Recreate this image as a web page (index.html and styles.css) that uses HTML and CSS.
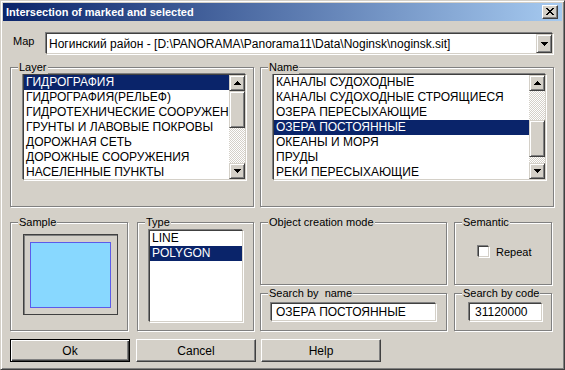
FILE: index.html
```html
<!DOCTYPE html>
<html>
<head>
<meta charset="utf-8">
<title>Intersection of marked and selected</title>
<link rel="stylesheet" href="styles.css">
</head>
<body>
<div class="window">
  <div class="titlebar">
    <span class="title">Intersection of marked and selected</span>
    <span class="close raised"><svg width="8" height="7" viewBox="0 0 8 7" shape-rendering="crispEdges"><path fill="#000" d="M0 0h2v1H0zM6 0h2v1H6zM1 1h2v1H1zM5 1h2v1H5zM2 2h4v1H2zM3 3h2v1H3zM2 4h4v1H2zM1 5h2v1H1zM5 5h2v1H5zM0 6h2v1H0zM6 6h2v1H6z"/></svg></span>
  </div>
  <div class="content">
    <div class="maprow">
      <span class="maplabel">Map</span>
      <div class="combo sunken">
        <span class="combo-text">Ногинский район - [D:\PANORAMA\Panorama11\Data\Noginsk\noginsk.sit]</span>
        <span class="sbtn dropbtn"><svg width="7" height="4" viewBox="0 0 7 4" shape-rendering="crispEdges"><path fill="#000" d="M0 0h7v1H0zM1 1h5v1H1zM2 2h3v1H2zM3 3h1v1H3z"/></svg></span>
      </div>
    </div>

    <div class="row2">
      <div class="group g-layer">
        <span class="legend">Layer</span>
        <div class="listbox sunken lb-big">
          <div class="items">
            <div class="item sel">ГИДРОГРАФИЯ</div>
            <div class="item">ГИДРОГРАФИЯ(РЕЛЬЕФ)</div>
            <div class="item">ГИДРОТЕХНИЧЕСКИЕ СООРУЖЕН</div>
            <div class="item">ГРУНТЫ И ЛАВОВЫЕ ПОКРОВЫ</div>
            <div class="item">ДОРОЖНАЯ СЕТЬ</div>
            <div class="item">ДОРОЖНЫЕ СООРУЖЕНИЯ</div>
            <div class="item">НАСЕЛЕННЫЕ ПУНКТЫ</div>
          </div>
          <div class="scrollbar">
            <span class="sbtn"><svg width="7" height="4" viewBox="0 0 7 4" shape-rendering="crispEdges"><path fill="#000" d="M3 0h1v1H3zM2 1h3v1H2zM1 2h5v1H1zM0 3h7v1H0z"/></svg></span>
            <span class="sbtn thumb"></span>
            <span class="track"></span>
            <span class="sbtn"><svg width="7" height="4" viewBox="0 0 7 4" shape-rendering="crispEdges"><path fill="#000" d="M0 0h7v1H0zM1 1h5v1H1zM2 2h3v1H2zM3 3h1v1H3z"/></svg></span>
          </div>
        </div>
      </div>
      <div class="group g-name">
        <span class="legend">Name</span>
        <div class="listbox sunken lb-big">
          <div class="items">
            <div class="item">КАНАЛЫ СУДОХОДНЫЕ</div>
            <div class="item">КАНАЛЫ СУДОХОДНЫЕ СТРОЯЩИЕСЯ</div>
            <div class="item">ОЗЕРА ПЕРЕСЫХАЮЩИЕ</div>
            <div class="item sel">ОЗЕРА ПОСТОЯННЫЕ</div>
            <div class="item">ОКЕАНЫ И МОРЯ</div>
            <div class="item">ПРУДЫ</div>
            <div class="item">РЕКИ ПЕРЕСЫХАЮЩИЕ</div>
          </div>
          <div class="scrollbar">
            <span class="sbtn"><svg width="7" height="4" viewBox="0 0 7 4" shape-rendering="crispEdges"><path fill="#000" d="M3 0h1v1H3zM2 1h3v1H2zM1 2h5v1H1zM0 3h7v1H0z"/></svg></span>
            <span class="track t-top"></span>
            <span class="sbtn thumb"></span>
            <span class="track"></span>
            <span class="sbtn"><svg width="7" height="4" viewBox="0 0 7 4" shape-rendering="crispEdges"><path fill="#000" d="M0 0h7v1H0zM1 1h5v1H1zM2 2h3v1H2zM3 3h1v1H3z"/></svg></span>
          </div>
        </div>
      </div>
    </div>

    <div class="row3">
      <div class="group g-sample">
        <span class="legend">Sample</span>
        <div class="sample-frame"><div class="sample-poly"></div></div>
      </div>
      <div class="group g-type">
        <span class="legend">Type</span>
        <div class="listbox sunken lb-type">
          <div class="items">
            <div class="item">LINE</div>
            <div class="item sel">POLYGON</div>
          </div>
        </div>
      </div>
      <div class="midcol">
        <div class="group g-mode">
          <span class="legend">Object creation mode</span>
        </div>
        <div class="group g-sname">
          <span class="legend">Search by &nbsp;name</span>
          <div class="field sunken f-name">ОЗЕРА ПОСТОЯННЫЕ</div>
        </div>
      </div>
      <div class="rightcol">
        <div class="group g-sem">
          <span class="legend">Semantic</span>
          <label class="check"><span class="box sunken"></span><span>Repeat</span></label>
        </div>
        <div class="group g-scode">
          <span class="legend">Search by code</span>
          <div class="field sunken f-code">31120000</div>
        </div>
      </div>
    </div>

    <div class="buttons">
      <span class="btn default">Ok</span>
      <span class="btn">Cancel</span>
      <span class="btn b-help">Help</span>
    </div>
  </div>
</div>
</body>
</html>
```

FILE: styles.css
```css
html, body {
  margin: 0;
  padding: 0;
  background: #d4d0c8;
}

.window {
  width: 565px;
  height: 370px;
  box-sizing: border-box;
  background: #d4d0c8;
  border: 1px solid;
  border-color: #d4d0c8 #404040 #404040 #d4d0c8;
  box-shadow: inset 1px 1px 0 #fff, inset -1px -1px 0 #808080;
  padding: 2px;
  display: flex;
  flex-direction: column;
  font-family: "Liberation Sans", Arial, sans-serif;
  font-size: 12px;
  color: #000;
}

.titlebar {
  height: 18px;
  flex: none;
  background: linear-gradient(to right, #0a246a, #a6caf0);
  display: flex;
  align-items: center;
  justify-content: space-between;
  padding: 0 4px 0 3px;
}

.title {
  color: #fff;
  font-weight: bold;
  font-size: 11px;
}

.raised {
  box-sizing: border-box;
  background: #d4d0c8;
  border: 1px solid;
  border-color: #fff #404040 #404040 #fff;
  box-shadow: inset -1px -1px 0 #808080;
}

.close {
  width: 16px;
  height: 14px;
  display: flex;
  align-items: center;
  justify-content: center;
  padding-bottom: 1px;
}

.content {
  flex: 1;
  display: flex;
  flex-direction: column;
  padding: 11px 8px 0 7px;
}

/* sunken 2px ring: inner ring as border, outer ring as shadow */
.sunken {
  box-sizing: border-box;
  background: #fff;
  border: 1px solid;
  border-color: #404040 #d4d0c8 #d4d0c8 #404040;
  box-shadow: -1px -1px 0 #808080, 1px 1px 0 #fff;
}

.maprow {
  display: flex;
  height: 23px;
}

.maplabel {
  width: 35px;
  box-sizing: border-box;
  padding-left: 3px;
  line-height: 19px;
  font-size: 11px;
}

.combo {
  flex: 1;
  margin: 1px 1px 0 1px;
  height: 21px;
  display: flex;
  align-items: center;
  justify-content: space-between;
}

.combo-text {
  padding-left: 2px;
  white-space: nowrap;
}

.sbtn {
  box-sizing: border-box;
  display: flex;
  align-items: center;
  justify-content: center;
  width: 16px;
  height: 16px;
  flex: none;
  background: #d4d0c8;
  border: 1px solid;
  border-color: #d4d0c8 #404040 #404040 #d4d0c8;
  box-shadow: inset 1px 1px 0 #fff, inset -1px -1px 0 #808080;
}

.dropbtn {
  height: 19px;
  padding-top: 1px;
}

.row2 {
  margin-top: 12px;
  display: flex;
  gap: 6px;
  height: 140px;
  flex: none;
}

.group {
  position: relative;
  box-sizing: border-box;
  border: 1px solid #808080;
  box-shadow: inset 1px 1px 0 #fff, 1px 1px 0 #fff;
}

.legend {
  position: absolute;
  top: -7px;
  left: 7px;
  padding: 0 1px;
  font-size: 11px;
  line-height: 13px;
  background: #d4d0c8;
  white-space: nowrap;
}

.g-layer {
  width: 244px;
  padding: 6px 0 0 12px;
}

.g-name {
  flex: 1;
  padding: 6px 0 0 12px;
}

.listbox {
  display: flex;
  overflow: hidden;
}

.lb-big {
  height: 106px;
}

.g-layer .lb-big {
  width: 223px;
}

.g-name .lb-big {
  width: 273px;
}

.items {
  flex: 1;
  min-width: 0;
  overflow: hidden;
}

.item {
  height: 15px;
  line-height: 15px;
  padding-left: 2px;
  white-space: nowrap;
  overflow: hidden;
}

.item.sel {
  background: #0a246a;
  color: #fff;
}

.scrollbar {
  width: 16px;
  display: flex;
  flex-direction: column;
  flex: none;
}

.track {
  flex: 1;
  background: repeating-conic-gradient(#d4d0c8 0 25%, #fff 0 50%) 0 0 / 2px 2px;
}

.track.t-top {
  flex: none;
  height: 29px;
}

.thumb {
  height: 37px;
}

.row3 {
  margin-top: 15px;
  display: flex;
  height: 109px;
  flex: none;
}

.g-sample {
  width: 118px;
  margin-right: 9px;
  padding: 11px 0 0 12px;
}

.sample-frame {
  box-sizing: border-box;
  width: 95px;
  height: 81px;
  border: 1px solid #404040;
  box-shadow: inset 1px 1px 0 #808080;
  background: #d4d0c8;
  padding: 7px 0 0 6px;
}

.sample-poly {
  box-sizing: border-box;
  width: 81px;
  height: 66px;
  background: #88d8ff;
  border: 1px solid #5b5bea;
}

.g-type {
  width: 117px;
  margin-right: 6px;
  padding: 7px 0 0 11px;
}

.lb-type {
  width: 94px;
  height: 92px;
}

.midcol {
  width: 187px;
  margin-right: 7px;
  display: flex;
  flex-direction: column;
  gap: 8px;
}

.g-mode {
  height: 63px;
}

.g-sname {
  height: 38px;
  padding: 9px 0 0 10px;
}

.field {
  height: 18px;
  line-height: 16px;
  white-space: nowrap;
}

.f-name {
  width: 165px;
  padding-left: 4px;
}

.rightcol {
  width: 98px;
  display: flex;
  flex-direction: column;
  gap: 8px;
}

.g-sem {
  height: 63px;
  padding: 22px 0 0 22px;
}

.check {
  display: flex;
  align-items: center;
  gap: 7px;
  height: 13px;
  padding-left: 1px;
  font-size: 11px;
}

.box {
  width: 11px;
  height: 11px;
}

.g-scode {
  height: 38px;
  padding: 9px 0 0 14px;
}

.f-code {
  width: 73px;
  padding-left: 5px;
}

.buttons {
  margin-top: 8px;
  display: flex;
  height: 23px;
  flex: none;
}

.btn {
  box-sizing: border-box;
  width: 120px;
  height: 23px;
  display: flex;
  align-items: center;
  justify-content: center;
  background: #d4d0c8;
  border: 1px solid;
  border-color: #fff #404040 #404040 #fff;
  box-shadow: inset -1px -1px 0 #808080;
  margin-right: 6px;
}

.btn.default {
  border-color: #000;
  box-shadow: inset 1px 1px 0 #fff, inset -1px -1px 0 #404040, inset -2px -2px 0 #808080;
}

.b-help {
  margin-left: -1px;
}
```
